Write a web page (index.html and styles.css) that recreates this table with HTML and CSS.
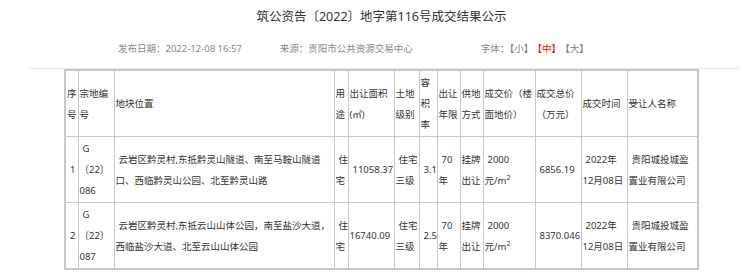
FILE: index.html
```html
<!DOCTYPE html>
<html lang="zh-CN">
<head>
<meta charset="utf-8">
<title>筑公资告〔2022〕地字第116号成交结果公示</title>
<link rel="stylesheet" href="styles.css">
</head>
<body>
<div class="wrap">
  <h1 class="title">筑公资告〔2022〕地字第116号成交结果公示</h1>
  <div class="meta">
    <span class="date">发布日期：2022-12-08 16:57</span>
    <span class="source">来源：贵阳市公共资源交易中心</span>
    <span class="size">字体：<a class="sz">【小】</a><a class="sz on">【中】</a><a class="sz">【大】</a></span>
  </div>
  <table class="grid">
    <colgroup>
      <col class="c1"><col class="c2"><col class="c3"><col class="c4"><col class="c5"><col class="c6"><col class="c7"><col class="c8"><col class="c9"><col class="c10"><col class="c11"><col class="c12"><col class="c13">
    </colgroup>
    <tr>
      <td>序<br>号</td>
      <td>宗地编<br>号</td>
      <td>地块位置</td>
      <td>用<br>途</td>
      <td>出让面积<br>(㎡)</td>
      <td>土地<br>级别</td>
      <td>容<br>积<br>率</td>
      <td>出让<br>年限</td>
      <td>供地<br>方式</td>
      <td>成交价（楼<br>面地价）</td>
      <td>成交总价<br>（万元）</td>
      <td>成交时间</td>
      <td>受让人名称</td>
    </tr>
    <tr>
      <td class="ind">1</td>
      <td class="ind">G<br>〔22〕<br>086</td>
      <td class="ind">云岩区黔灵村,东抵黔灵山隧道、南至马鞍山隧道<br>口、西临黔灵山公园、北至黔灵山路</td>
      <td class="ind">住<br>宅</td>
      <td class="ind">11058.37</td>
      <td class="ind">住宅<br>三级</td>
      <td class="ind">3.1</td>
      <td class="ind">70<br>年</td>
      <td>挂牌<br>出让</td>
      <td class="ind">2000<br>元/m<sup>2</sup></td>
      <td class="ind">6856.19</td>
      <td class="ind">2022年<br>12月08日</td>
      <td class="ind">贵阳城投城盈<br>置业有限公司</td>
    </tr>
    <tr>
      <td class="ind">2</td>
      <td class="ind">G<br>〔22〕<br>087</td>
      <td class="ind">云岩区黔灵村,东抵云山山体公园，南至盐沙大道，<br>西临盐沙大道、北至云山山体公园</td>
      <td class="ind">住<br>宅</td>
      <td>16740.09</td>
      <td class="ind">住宅<br>三级</td>
      <td class="ind">2.5</td>
      <td class="ind">70<br>年</td>
      <td>挂牌<br>出让</td>
      <td class="ind">2000<br>元/m<sup>2</sup></td>
      <td class="ind">8370.046</td>
      <td class="ind">2022年<br>12月08日</td>
      <td class="ind">贵阳城投城盈<br>置业有限公司</td>
    </tr>
  </table>
</div>
</body>
</html>
```
FILE: styles.css
```css
html, body {
  margin: 0;
  padding: 0;
  background: #fff;
}
body {
  font-family: "Noto Sans", "Noto Sans CJK SC", sans-serif;
  color: #333;
}
.wrap {
  margin-left: 30px;
  width: 710px;
}
.title {
  margin: 0;
  font-size: 12.5px;
  font-weight: normal;
  line-height: 34px;
  text-align: center;
  color: #333;
  padding-left: 0;
  width: 703px;
}
.meta {
  display: flex;
  font-size: 9.5px;
  line-height: 30px;
  height: 30px;
  padding-bottom: 4px;
  color: #888;
  border-bottom: 1px solid #e6e6e6;
  padding-left: 88px;
}
.source {
  margin-left: 38px;
}
.size {
  margin-left: 68px;
}
.sz {
  color: #777;
  margin-right: 4px;
}
.sz.on {
  color: #f00;
}
.grid {
  border-collapse: collapse;
  table-layout: fixed;
  width: 634px;
  margin-left: 34px;
  border: 2px solid #c8c8c8;
  font-size: 9.5px;
  line-height: 21px;
  color: #333;
}
.grid td {
  border: 1px solid #c8c8c8;
  padding: 1px 1px;
  vertical-align: middle;
  text-align: left;
  white-space: nowrap;
  overflow: visible;
}
.grid td.ind {
  text-indent: 3px;
}
.grid sup {
  font-size: 7px;
  line-height: 0;
  vertical-align: 4px;
}
.c1 { width: 13px; }
.c2 { width: 36px; }
.c3 { width: 220px; }
.c4 { width: 14px; }
.c5 { width: 46px; }
.c6 { width: 25px; }
.c7 { width: 18px; }
.c8 { width: 23px; }
.c9 { width: 23px; }
.c10 { width: 52px; }
.c11 { width: 46px; }
.c12 { width: 46px; }
.c13 { width: 71px; }
```
